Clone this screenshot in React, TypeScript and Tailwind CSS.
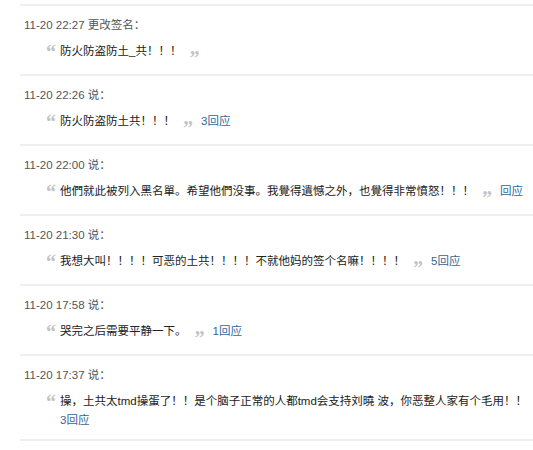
const entries = [
  { time: '11-20 22:27', label: ' 更改签名：', text: '防火防盗防土_共！！！', reply: '' },
  { time: '11-20 22:26', label: ' 说：', text: '防火防盗防土共！！！', reply: '3回应' },
  {
    time: '11-20 22:00',
    label: ' 说：',
    text: '他們就此被列入黑名單。希望他們没事。我覺得遺憾之外，也覺得非常憤怒！！！',
    reply: '回应',
  },
  {
    time: '11-20 21:30',
    label: ' 说：',
    text: '我想大叫！！！！可恶的土共！！！！不就他妈的签个名嘛！！！！',
    reply: '5回应',
  },
  { time: '11-20 17:58', label: ' 说：', text: '哭完之后需要平静一下。', reply: '1回应' },
  {
    time: '11-20 17:37',
    label: ' 说：',
    text: '操，土共太tmd操蛋了！！是个脑子正常的人都tmd会支持刘曉 波，你恶整人家有个毛用！！',
    reply: '3回应',
    wrapReply: true,
  },
];

function OpenQuote() {
  return (
    <span className="inline-block w-[14px] align-[-4px] font-['Liberation_Serif',serif] text-[20px] font-bold leading-[0] text-[#c4c4c4]">
      “
    </span>
  );
}

function CloseQuote() {
  return (
    <span className="mx-[8px] inline-block align-[-10px] font-['Liberation_Serif',serif] text-[20px] font-bold leading-[0] text-[#c4c4c4]">
      ”
    </span>
  );
}

export default function App() {
  return (
    <div className="min-h-screen w-[533px] overflow-hidden bg-white pt-[4px] font-['Liberation_Sans','Noto_Sans_CJK_SC',sans-serif] text-[11.5px]">
      <div className="ml-[20px]">
        {entries.map((e, i) => (
          <div
            key={i}
            className={`border-t-2 border-[#efefef] pt-[10px] ${e.wrapReply ? 'pb-[9px]' : 'pb-[13px]'}`}
          >
            {/* time + action */}
            <div className="pl-[4px] leading-[18px] text-[#555]">
              {e.time}
              {e.label}
            </div>
            {/* quoted status */}
            <div className="mt-[8px] pl-[26px] leading-[19px] text-[#222]">
              <div className="whitespace-nowrap">
                <OpenQuote />
                {e.text}
                <CloseQuote />
                {e.reply && !e.wrapReply && (
                  <a className="text-[#336699]" href="#">
                    {e.reply}
                  </a>
                )}
              </div>
              {e.wrapReply && (
                <a className="ml-[14px] text-[#336699]" href="#">
                  {e.reply}
                </a>
              )}
            </div>
          </div>
        ))}
        <div className="border-t-2 border-[#efefef]" />
      </div>
    </div>
  );
}
